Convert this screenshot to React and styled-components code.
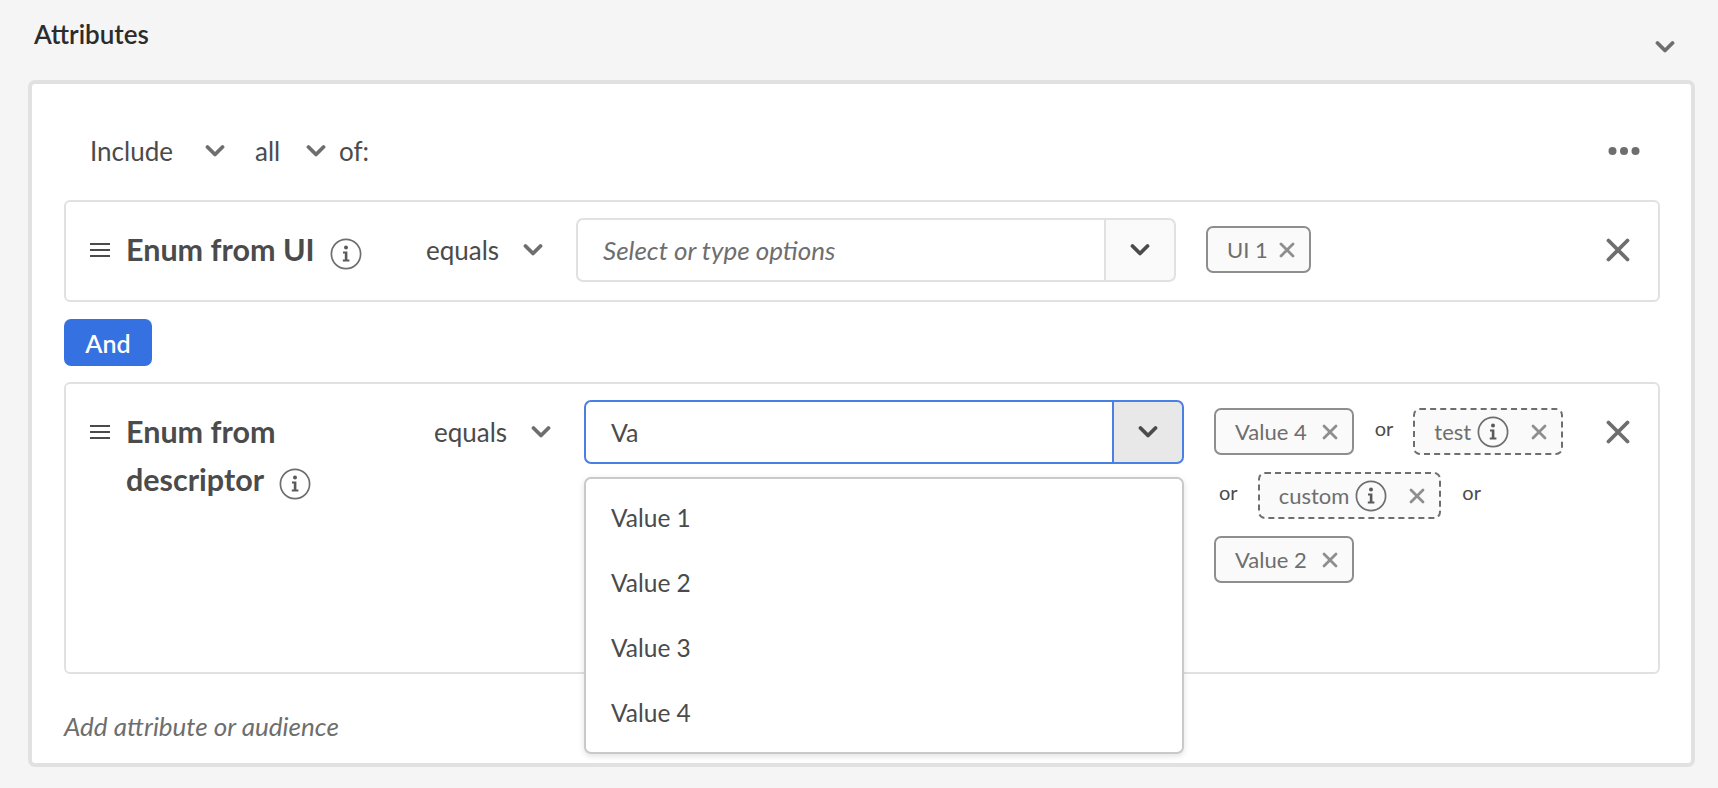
import React from "react";
import styled, { createGlobalStyle } from "styled-components";

const GlobalStyle = createGlobalStyle`
  html, body {
    margin: 0;
    padding: 0;
    background: #f5f5f5;
    font-family: "Lato", "Noto Sans", sans-serif;
    color: #4b4b4b;
  }
`;

function Chevron({ size = 20, color = "#6e6e6e" }) {
  return (
    <svg width={size} height={size} viewBox="0 0 20 20" fill="none">
      <path d="M2.5 6 L10 13.5 L17.5 6" stroke={color} strokeWidth="3.8" strokeLinecap="round" strokeLinejoin="round" />
    </svg>
  );
}

function InfoIcon() {
  return (
    <svg width="32" height="32" viewBox="0 0 32 32" fill="none">
      <circle cx="16" cy="16" r="14.6" stroke="#6e6e6e" strokeWidth="1.7" />
      <circle cx="16" cy="9.6" r="2" fill="#5a5a5a" />
      <path d="M13 13.6 H17.4 V21.6 H19.4 V23.6 H12.8 V21.6 H14.8 V15.6 H13 Z" fill="#5a5a5a" />
    </svg>
  );
}

function SmallClose() {
  return (
    <svg width="16" height="16" viewBox="0 0 16 16" fill="none">
      <path d="M2 2 L14 14 M14 2 L2 14" stroke="#8e8e8e" strokeWidth="2.8" strokeLinecap="round" />
    </svg>
  );
}

function RemoveIcon() {
  return (
    <svg width="24" height="24" viewBox="0 0 24 24" fill="none">
      <path d="M2.5 2.5 L21.5 21.5 M21.5 2.5 L2.5 21.5" stroke="#6e6e6e" strokeWidth="3.8" strokeLinecap="round" />
    </svg>
  );
}

function DragHandle() {
  return (
    <svg width="20" height="16" viewBox="0 0 20 16" fill="none">
      <path d="M0 2 H20 M0 8 H20 M0 14 H20" stroke="#4b4b4b" strokeWidth="1.8" />
    </svg>
  );
}

function MoreIcon() {
  return (
    <svg width="32" height="12" viewBox="0 0 32 12" fill="#6e6e6e">
      <circle cx="4.5" cy="6" r="4" />
      <circle cx="16" cy="6" r="4" />
      <circle cx="27.5" cy="6" r="4" />
    </svg>
  );
}

function Combo({ focused, value, placeholder, children }) {
  return (
    <ComboBox>
      <ComboField $focused={focused}>
        {value ? <ComboValue>{value}</ComboValue> : <ComboPlaceholder>{placeholder}</ComboPlaceholder>}
      </ComboField>
      <ComboButton $focused={focused}>
        <Chevron color="#4b4b4b" />
      </ComboButton>
      {children}
    </ComboBox>
  );
}

function Tag({ label, custom, gap }) {
  return (
    <TagBox $custom={custom}>
      <TagLabel $custom={custom}>{label}</TagLabel>
      {custom && <InfoIcon />}
      <TagClose $gap={gap}>
        <SmallClose />
      </TagClose>
    </TagBox>
  );
}

export default function App() {
  return (
    <Page>
      <GlobalStyle />
      <Header>
        <Title>Attributes</Title>
        <Collapse>
          <Chevron />
        </Collapse>
      </Header>
      <Card>
        <Toolbar>
          <SelectLabel $width={115}>Include</SelectLabel>
          <Chevron />
          <SelectLabel $width={51} $left={30}>all</SelectLabel>
          <Chevron />
          <OfLabel>of:</OfLabel>
          <More>
            <MoreIcon />
          </More>
        </Toolbar>

        <Rule $height={102}>
          <Handle>
            <DragHandle />
          </Handle>
          <Name $width={299}>
            Enum from UI
            <NameInfo>
              <InfoIcon />
            </NameInfo>
          </Name>
          <Operator>
            <OperatorLabel>equals</OperatorLabel>
            <Chevron />
          </Operator>
          <Combo placeholder="Select or type options" />
          <Tags>
            <Tag label="UI 1" gap={7} />
          </Tags>
          <Remove>
            <RemoveIcon />
          </Remove>
        </Rule>

        <AndButton>And</AndButton>

        <Rule $height={292}>
          <Handle>
            <DragHandle />
          </Handle>
          <Name $width={307}>
            Enum from
            <br />
            descriptor
            <NameInfo>
              <InfoIcon />
            </NameInfo>
          </Name>
          <Operator>
            <OperatorLabel>equals</OperatorLabel>
            <Chevron />
          </Operator>
          <Combo focused value="Va">
            <Menu>
              <MenuItem>Value 1</MenuItem>
              <MenuItem>Value 2</MenuItem>
              <MenuItem>Value 3</MenuItem>
              <MenuItem>Value 4</MenuItem>
            </Menu>
          </Combo>
          <Tags>
            <Tag label="Value 4" gap={11} />
            <OrLabel>or</OrLabel>
            <Tag label="test" custom gap={22} />
            <OrLabel>or</OrLabel>
            <Tag label="custom" custom gap={22} />
            <OrLabel>or</OrLabel>
            <Tag label="Value 2" gap={11} />
          </Tags>
          <Remove>
            <RemoveIcon />
          </Remove>
        </Rule>

        <AddLink>Add attribute or audience</AddLink>
      </Card>
    </Page>
  );
}

const Page = styled.div`
  width: 1718px;
  height: 788px;
  padding: 0 23px 0 28px;
  box-sizing: border-box;
  overflow: hidden;
`;

const Header = styled.div`
  height: 80px;
  display: flex;
  justify-content: space-between;
`;

const Title = styled.div`
  margin: 18px 0 0 6px;
  font-size: 26px;
  line-height: 32px;
  font-weight: 600;
  color: #2c2c2c;
`;

const Collapse = styled.div`
  margin: 37px 20px 0 0;
  height: 20px;
`;

const Card = styled.div`
  box-sizing: border-box;
  height: 687px;
  background: #fff;
  border: 4px solid #e1e1e1;
  border-radius: 7px;
  padding: 47px 31px 0 32px;
`;

const Toolbar = styled.div`
  height: 40px;
  margin-bottom: 29px;
  padding: 0 20px 0 26px;
  display: flex;
  align-items: center;
  font-size: 26px;
`;

const SelectLabel = styled.span`
  width: ${(p) => p.$width}px;
  margin-left: ${(p) => p.$left || 0}px;
`;

const OfLabel = styled.span`
  margin-left: 13px;
`;

const More = styled.div`
  margin-left: auto;
  display: flex;
`;

const Rule = styled.div`
  box-sizing: border-box;
  height: ${(p) => p.$height}px;
  border: 2px solid #e1e1e1;
  border-radius: 6px;
  padding: 16px 27px 0 24px;
  display: flex;
  align-items: flex-start;
`;

const Handle = styled.div`
  height: 48px;
  margin-top: 8px;
  display: flex;
  align-items: center;
`;

const Name = styled.div`
  flex: 0 0 ${(p) => p.$width}px;
  margin: 7px 0 0 16px;
  font-size: 30.5px;
  line-height: 48px;
  font-weight: 700;
  color: #4b4b4b;
`;

const NameInfo = styled.span`
  display: inline-flex;
  vertical-align: -9px;
  margin-left: 15px;
`;

const Operator = styled.div`
  flex: 0 0 150px;
  height: 48px;
  margin-top: 8px;
  margin-left: 1px;
  display: flex;
  align-items: center;
  font-size: 26px;
`;

const OperatorLabel = styled.span`
  width: 97px;
`;

const ComboBox = styled.div`
  position: relative;
  box-sizing: border-box;
  flex: 0 0 600px;
  height: 64px;
  display: flex;
`;

const ComboField = styled.div`
  flex: 1;
  display: flex;
  align-items: center;
  padding-left: 25px;
  border: 2px solid ${(p) => (p.$focused ? "#4a7fe3" : "#e1e1e1")};
  border-right: none;
  border-radius: 7px 0 0 7px;
  background: #fff;
`;

const ComboValue = styled.span`
  font-size: 25px;
  color: #4b4b4b;
`;

const ComboPlaceholder = styled.span`
  font-size: 26px;
  font-style: italic;
  color: #6e6e6e;
`;

const ComboButton = styled.div`
  box-sizing: border-box;
  width: 72px;
  display: flex;
  align-items: center;
  justify-content: center;
  border: 2px solid ${(p) => (p.$focused ? "#4a7fe3" : "#e1e1e1")};
  border-radius: 0 7px 7px 0;
  background: ${(p) => (p.$focused ? "#e8e8e8" : "#fafafa")};
`;

const Menu = styled.div`
  position: absolute;
  top: 77px;
  left: 0;
  right: 0;
  z-index: 2;
  box-sizing: border-box;
  height: 277px;
  padding: 6px 0 9px;
  background: #fff;
  border: 2px solid #c9c9c9;
  border-radius: 7px;
  box-shadow: 0 2px 6px rgba(0, 0, 0, 0.12);
`;

const MenuItem = styled.div`
  height: 65px;
  padding-left: 25px;
  display: flex;
  align-items: center;
  font-size: 24.5px;
  color: #4b4b4b;
`;

const Tags = styled.div`
  flex: 0 0 375px;
  margin: 8px 0 0 30px;
  display: flex;
  flex-wrap: wrap;
  align-items: center;
  row-gap: 17px;
`;

const TagBox = styled.div`
  box-sizing: border-box;
  height: 47px;
  margin-right: 16px;
  padding: 0 14px 0 19px;
  display: flex;
  align-items: center;
  background: #fafafa;
  border: 2px ${(p) => (p.$custom ? "dashed #6e6e6e" : "solid #8e8e8e")};
  border-radius: 7px;
  svg {
    flex-shrink: 0;
  }
`;

const TagLabel = styled.span`
  font-size: 22px;
  color: #6e6e6e;
  margin-right: ${(p) => (p.$custom ? 6 : 4)}px;
`;

const TagClose = styled.span`
  display: flex;
  margin-left: ${(p) => p.$gap}px;
`;

const OrLabel = styled.span`
  margin: -7px 20px 0 5px;
  font-size: 20px;
  color: #4b4b4b;
`;

const Remove = styled.div`
  margin: 20px 1px 0 auto;
  display: flex;
`;

const AndButton = styled.div`
  box-sizing: border-box;
  width: 88px;
  height: 47px;
  margin: 17px 0 16px;
  display: flex;
  align-items: center;
  justify-content: center;
  background: #3571e0;
  border-radius: 7px;
  color: #fff;
  font-size: 25px;
  font-weight: 600;
`;

const AddLink = styled.div`
  margin-top: 37px;
  font-size: 26px;
  line-height: 30px;
  font-style: italic;
  color: #6e6e6e;
`;
